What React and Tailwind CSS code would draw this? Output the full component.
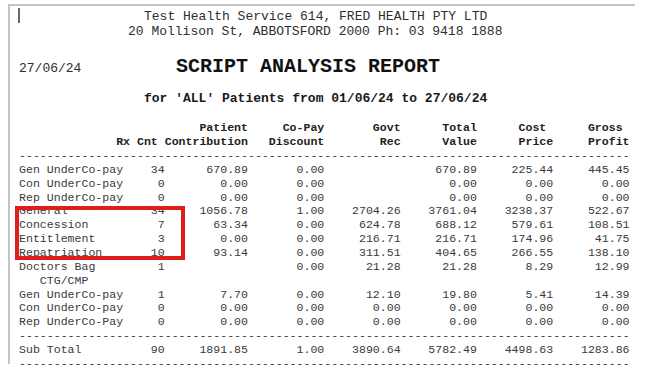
import React from 'react';

const rows = [
  ['Gen UnderCo-pay', '34', '670.89', '0.00', '', '670.89', '225.44', '445.45'],
  ['Con UnderCo-pay', '0', '0.00', '0.00', '', '0.00', '0.00', '0.00'],
  ['Rep UnderCo-pay', '0', '0.00', '0.00', '', '0.00', '0.00', '0.00'],
  ['General', '34', '1056.78', '1.00', '2704.26', '3761.04', '3238.37', '522.67'],
  ['Concession', '7', '63.34', '0.00', '624.78', '688.12', '579.61', '108.51'],
  ['Entitlement', '3', '0.00', '0.00', '216.71', '216.71', '174.96', '41.75'],
  ['Repatriation', '10', '93.14', '0.00', '311.51', '404.65', '266.55', '138.10'],
  ['Doctors Bag', '1', '', '0.00', '21.28', '21.28', '8.29', '12.99'],
  ['   CTG/CMP', '', '', '', '', '', '', ''],
  ['Gen UnderCo-pay', '1', '7.70', '0.00', '12.10', '19.80', '5.41', '14.39'],
  ['Con UnderCo-pay', '0', '0.00', '0.00', '0.00', '0.00', '0.00', '0.00'],
  ['Rep UnderCo-Pay', '0', '0.00', '0.00', '0.00', '0.00', '0.00', '0.00'],
];

const dashes = '-'.repeat(88);

function Row({ cells }) {
  return (
    <>
      <div className="whitespace-pre">{cells[0]}</div>
      {cells.slice(1).map((c, i) => (
        <div key={i} className="text-right whitespace-pre">{c}</div>
      ))}
    </>
  );
}

function Dashes() {
  return <div className="col-span-8 whitespace-pre">{dashes}</div>;
}

export default function App() {
  return (
    <div className="w-[655px] h-[371px] bg-white overflow-hidden" style={{ fontFamily: '"Liberation Mono", "Courier New", monospace' }}>
      <div className="relative ml-[8px] mt-[4px] w-[627px] h-[360px] border-t-2 border-l-2 border-[#c4c4c4] pl-[9px] pt-[3px] text-[#3a3a3a]">
        {/* caret */}
        <div className="absolute left-[8px] top-[2px] w-[2px] h-[15px] bg-[#6a6a6a]" />

        {/* Header */}
        <div className="text-[13px] leading-[15px] text-[#2e2e2e]">
          <div className="pl-[125px] whitespace-pre">Test Health Service 614, FRED HEALTH PTY LTD</div>
          <div className="pl-[109px] whitespace-pre">20 Mollison St, ABBOTSFORD 2000 Ph: 03 9418 1888</div>
        </div>

        <div className="flex items-baseline mt-[15.7px] h-[24px]">
          <div className="w-[157px] shrink-0 text-[13px] leading-[24px] text-[#2e2e2e]">27/06/24</div>
          <div className="text-[20px] leading-[24px] font-bold text-[#111]">SCRIPT ANALYSIS REPORT</div>
        </div>

        <div className="mt-[12.3px] pl-[125px] text-[13px] leading-[15px] font-bold text-[#1a1a1a] whitespace-pre">
          for 'ALL' Patients from 01/06/24 to 27/06/24
        </div>

        {/* Table */}
        <div className="mt-[15.4px] grid grid-cols-[14ch_7ch_12ch_11ch_11ch_11ch_11ch_11ch] text-[11.57px] leading-[13.85px]">
          <div className="col-span-2" />
          <div className="text-right font-bold text-[#222]">Patient</div>
          <div className="text-right font-bold text-[#222]">Co-Pay</div>
          <div className="text-right font-bold text-[#222]">Govt</div>
          <div className="text-right font-bold text-[#222]">Total</div>
          <div className="text-right font-bold text-[#222] pr-[1ch]">Cost</div>
          <div className="text-right font-bold text-[#222] pr-[1ch]">Gross</div>

          <div />
          <div className="text-right font-bold text-[#222] pr-[1ch]">Rx Cnt</div>
          <div className="text-right font-bold text-[#222]">Contribution</div>
          <div className="text-right font-bold text-[#222]">Discount</div>
          <div className="text-right font-bold text-[#222]">Rec</div>
          <div className="text-right font-bold text-[#222]">Value</div>
          <div className="text-right font-bold text-[#222]">Price</div>
          <div className="text-right font-bold text-[#222]">Profit</div>

          <Dashes />
          {rows.map((r, i) => (
            <Row key={i} cells={r} />
          ))}
          <Dashes />
          <Row cells={['Sub Total', '90', '1891.85', '1.00', '3890.64', '5782.49', '4498.63', '1283.86']} />
          <Dashes />
        </div>

        {/* highlight box */}
        <div className="absolute left-[5px] top-[200px] w-[170px] h-[54px] border-4 border-[#e01e1e]" />
      </div>
    </div>
  );
}
